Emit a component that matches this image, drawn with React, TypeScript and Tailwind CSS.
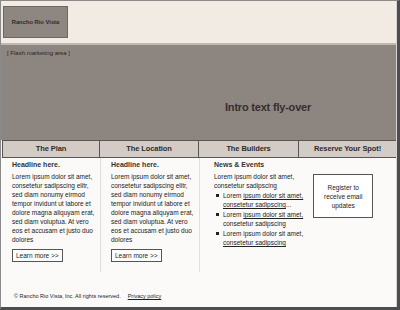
import React from "react";

const lorem = [
  "Lorem ipsum dolor sit amet,",
  "consetetur sadipscing elitr,",
  "sed diam nonumy eirmod",
  "tempor invidunt ut labore et",
  "dolore magna aliquyam erat,",
  "sed diam voluptua. At vero",
  "eos et accusam et justo duo",
  "dolores",
];

const navItems = ["The Plan", "The Location", "The Builders", "Reserve Your Spot!"];

function HeadlineColumn() {
  return (
    <div className="flex flex-col border-r border-[#e2dedb] pl-[10px] pt-[1px] pb-[10px]">
      <h3 className="text-[7px] font-bold leading-[11px] text-[#333]">Headline here.</h3>
      <p className="mt-[2px] whitespace-nowrap text-[6.5px] leading-[9px] text-[#222]">
        {lorem.map((l) => (
          <span key={l} className="block">
            {l}
          </span>
        ))}
      </p>
      <button
        type="button"
        className="mt-[5px] w-fit border border-[#555] bg-white px-[3px] py-[1px] text-[6.5px] leading-[9px] text-[#222]"
      >
        Learn more &gt;&gt;
      </button>
    </div>
  );
}

export default function App() {
  return (
    <div
      className="h-[310px] w-[400px] overflow-hidden bg-[#fbfaf9] border-t border-l border-[#8a8a8a] border-r-[3px] border-r-[#4d4d4d] border-b-[3px] border-b-[#4d4d4d]"
      style={{ fontFamily: '"Liberation Sans", Arial, sans-serif' }}
    >
      <div className="flex h-full flex-col border-r border-[#d8d4d2]">
        {/* header */}
        <header className="flex h-[42px] shrink-0 items-start bg-[#f2ebe4] pl-[2px] pt-[5px]">
          <div className="flex h-[32px] w-[65px] items-center justify-center border border-[#6e6661] bg-[#8e8680]">
            <span className="text-[5.8px] font-bold text-[#2e2a28]">Rancho Rio Vista</span>
          </div>
        </header>

        {/* flash */}
        <section className="relative h-[97px] shrink-0 border-t-2 border-[#c4b6b2] bg-[#8d8580]">
          <p className="pl-[6px] pt-[5px] text-[6px] leading-[7px] text-[#2a2624]">[ Flash marketing area ]</p>
          <p className="absolute left-[224px] top-[54px] text-[11px] font-bold tracking-[-0.2px] text-[#352f2d]">
            Intro text fly-over
          </p>
        </section>

        {/* nav */}
        <nav className="ml-[1px] grid h-[18px] shrink-0 grid-cols-[98px_99px_100px_1fr] border-y border-[#5a5552] bg-[#d3cbc5]">
          {navItems.map((n, i) => (
            <div
              key={n}
              className={`flex items-center justify-center text-[7.5px] font-bold tracking-[-0.1px] text-[#2f2b29] ${
                i < 3 ? "border-r border-[#5a5552]" : ""
              } ${i === 0 ? "border-l border-[#5a5552]" : ""}`}
            >
              {n}
            </div>
          ))}
        </nav>

        {/* content */}
        <div className="grid shrink-0 grid-cols-[99px_99px_1fr] pl-[1px]">
          <HeadlineColumn />
          <HeadlineColumn />
          <div className="flex gap-[10px] pl-[14px] pt-[1px]">
            <div className="flex flex-col whitespace-nowrap">
              <h3 className="text-[7px] font-bold leading-[11px] text-[#333]">News &amp; Events</h3>
              <p className="mt-[2px] text-[6.5px] leading-[9px] text-[#222]">
                <span className="block">Lorem ipsum dolor sit amet,</span>
                <span className="block">consetetur sadipscing</span>
              </p>
              <ul className="mt-[1px] flex flex-col gap-[1px] text-[6.5px] leading-[9px] text-[#222]">
                <li className="flex gap-[4px] pl-[2px]">
                  <span className="mt-[3px] h-[3px] w-[3px] shrink-0 bg-[#222]" />
                  <span>
                    Lorem <span className="underline">ipsum dolor sit amet,</span>
                    <br />
                    <span className="underline">consetetur sadipscing</span>...
                  </span>
                </li>
                <li className="flex gap-[4px] pl-[2px]">
                  <span className="mt-[3px] h-[3px] w-[3px] shrink-0 bg-[#222]" />
                  <span>
                    Lorem <span className="underline">ipsum dolor sit amet,</span>
                    <br />
                    consetetur sadipscing
                  </span>
                </li>
                <li className="flex gap-[4px] pl-[2px]">
                  <span className="mt-[3px] h-[3px] w-[3px] shrink-0 bg-[#222]" />
                  <span>
                    Lorem ipsum dolor sit amet,
                    <br />
                    <span className="underline">consetetur sadipscing</span>
                  </span>
                </li>
              </ul>
            </div>
            <div className="pt-[15px]">
              <div className="flex h-[44px] w-[60px] items-center justify-center border border-[#555] bg-white text-center text-[6.5px] leading-[9px] text-[#222]">
                Register to
                <br />
                receive email
                <br />
                updates
              </div>
            </div>
          </div>
        </div>

        {/* footer */}
        <footer className="mt-auto flex gap-[7px] pb-[7px] pl-[13px] text-[5.5px] text-[#222]">
          <span>© Rancho Rio Vista, Inc. All rights reserved.</span>
          <span className="underline">Privacy policy</span>
        </footer>
      </div>
    </div>
  );
}
